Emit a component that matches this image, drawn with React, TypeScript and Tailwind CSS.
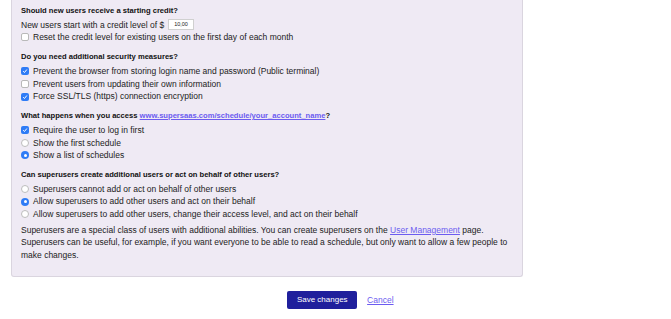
const Check = ({ on }: { on?: boolean }) =>
  on ? (
    <span className="inline-flex h-[8px] w-[8px] shrink-0 items-center justify-center rounded-[2px] bg-[#2f7cf6]">
      <svg viewBox="0 0 8 8" className="h-[6px] w-[6px]">
        <path d="M1.5 4.2 L3.3 6 L6.5 2" fill="none" stroke="white" strokeWidth="1.3" />
      </svg>
    </span>
  ) : (
    <span className="inline-block h-[8px] w-[8px] shrink-0 rounded-[2px] border border-[#b9b9b9] bg-white" />
  );

const Radio = ({ on }: { on?: boolean }) =>
  on ? (
    <span className="inline-flex h-[8px] w-[8px] shrink-0 items-center justify-center rounded-full bg-[#2f7cf6]">
      <span className="h-[3px] w-[3px] rounded-full bg-white" />
    </span>
  ) : (
    <span className="inline-block h-[8px] w-[8px] shrink-0 rounded-full border border-[#bdbdbd] bg-white" />
  );

const Option = ({ kind, on, children }: { kind: "check" | "radio"; on?: boolean; children: React.ReactNode }) => (
  <div className="flex h-[12.6px] items-center gap-[4px]">
    {kind === "check" ? <Check on={on} /> : <Radio on={on} />}
    <span>{children}</span>
  </div>
);

const Heading = ({ children }: { children: React.ReactNode }) => (
  <div className="mb-[2px] h-[13px] text-[7.6px] font-bold leading-[13px] text-[#111]">{children}</div>
);

export default function App() {
  return (
    <div className="min-h-[319px] w-[671px] bg-white font-['Liberation_Sans',Arial,sans-serif] text-[8.5px] leading-[12.6px] text-[#222]">
      <div className="ml-[11px] w-[512px] rounded-b-[3px] border border-t-0 border-[#dad5df] bg-[#efeaf4] px-[9px] pt-[3.5px] pb-[15px]">
        <Heading>Should new users receive a starting credit?</Heading>
        <div className="flex h-[12.6px] items-center">
          New users start with a credit level of $
          <span className="ml-[4px] inline-block h-[11px] w-[26px] border border-[#d0d0d0] bg-white pl-[5px] text-[5.5px] leading-[9px]">
            10,00
          </span>
        </div>
        <Option kind="check">Reset the credit level for existing users on the first day of each month</Option>

        <div className="mt-[6.5px]">
          <Heading>Do you need additional security measures?</Heading>
          <Option kind="check" on>
            Prevent the browser from storing login name and password (Public terminal)
          </Option>
          <Option kind="check">Prevent users from updating their own information</Option>
          <Option kind="check" on>
            Force SSL/TLS (https) connection encryption
          </Option>
        </div>

        <div className="mt-[6px]">
          <Heading>
            What happens when you access{" "}
            <span className="text-[#6c5cf0] underline">www.supersaas.com/schedule/your_account_name</span>?
          </Heading>
          <Option kind="check" on>
            Require the user to log in first
          </Option>
          <Option kind="radio">Show the first schedule</Option>
          <Option kind="radio" on>
            Show a list of schedules
          </Option>
        </div>

        <div className="mt-[6px]">
          <Heading>Can superusers create additional users or act on behalf of other users?</Heading>
          <Option kind="radio">Superusers cannot add or act on behalf of other users</Option>
          <Option kind="radio" on>
            Allow superusers to add other users and act on their behalf
          </Option>
          <Option kind="radio">
            Allow superusers to add other users, change their access level, and act on their behalf
          </Option>
        </div>

        <p className="mt-[3px] w-[488px]">
          Superusers are a special class of users with additional abilities. You can create superusers on the{" "}
          <span className="text-[#6c5cf0] underline">User Management</span> page. Superusers can be useful, for example,
          if you want everyone to be able to read a schedule, but only want to allow a few people to make changes.
        </p>
      </div>

      <div className="mt-[14px] flex items-center justify-center gap-[10px] pl-[10px]">
        <button className="h-[18px] rounded-[2px] bg-[#1f1f9c] px-[9.5px] text-[8px] text-white">Save changes</button>
        <span className="text-[8.5px] text-[#6c5cf0] underline">Cancel</span>
      </div>
    </div>
  );
}
